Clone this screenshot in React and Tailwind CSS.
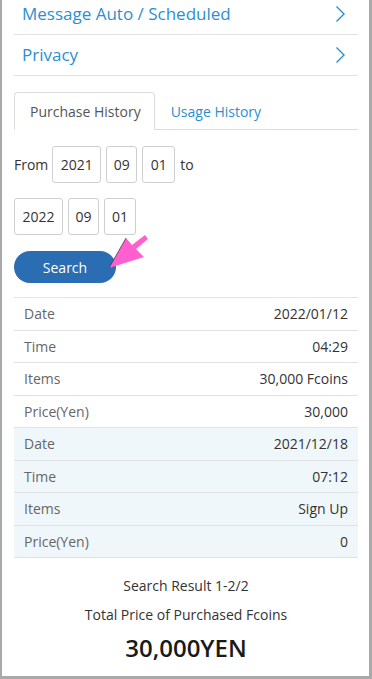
import React from "react";

const font = { fontFamily: '"Open Sans", "Noto Sans", sans-serif' };

const MenuRow = ({ label, first }) => (
  <div
    className={`flex h-[41px] items-center justify-between border-b border-[#e2e2e2] pl-[8px] pr-[12px] ${
      first ? "-mt-[6px]" : ""
    }`}
  >
    <span className="text-[17px] text-[#2a8fd0]">{label}</span>
    <svg width="11" height="18" viewBox="0 0 11 18" fill="none">
      <path d="M1.5 1.5 L9 9 L1.5 16.5" stroke="#2a8fd0" strokeWidth="1.4" />
    </svg>
  </div>
);

const DateBox = ({ value, w }) => (
  <div
    className={`flex h-[37px] items-center justify-center rounded-[3px] border border-[#cfcfcf] text-[14px] text-[#333] ${w}`}
  >
    {value}
  </div>
);

const Row = ({ label, value }) => (
  <div className="flex h-[32.5px] items-center justify-between border-b border-[#dfe3e6] px-[10px] text-[14px]">
    <span className="text-[#666]">{label}</span>
    <span className="text-[#333]">{value}</span>
  </div>
);

const records = [
  { date: "2022/01/12", time: "04:29", items: "30,000 Fcoins", price: "30,000", alt: false },
  { date: "2021/12/18", time: "07:12", items: "Sign Up", price: "0", alt: true },
];

export default function App() {
  return (
    <div
      style={font}
      className="relative h-[679px] w-[372px] overflow-hidden border-b-[3px] border-l-2 border-r-[3px] border-[#a9a9a9] bg-white"
    >
      <div className="pl-[12px] pr-[11px]">
        <MenuRow label="Message Auto / Scheduled" first />
        <MenuRow label="Privacy" />

        {/* tabs */}
        <div className="mt-[16px] flex h-[38px] border-b border-[#dcdcdc]">
          <div className="-mb-px flex items-center rounded-t-[4px] border border-b-white border-[#dcdcdc] bg-white pl-[15px] pr-[13px] pt-px text-[14px] text-[#555]">
            Purchase History
          </div>
          <div className="flex items-center pl-[16px] pt-px text-[14px] text-[#2a8fd0]">
            Usage History
          </div>
        </div>

        {/* date range */}
        <div className="mt-[16px] flex w-[200px] flex-wrap items-center gap-x-[5px] gap-y-[15px] text-[14px] text-[#333]">
          <span className="-mr-px">From</span>
          <DateBox value="2021" w="w-[49px]" />
          <DateBox value="09" w="w-[31px]" />
          <DateBox value="01" w="w-[33px]" />
          <span>to</span>
          <DateBox value="2022" w="w-[49px]" />
          <DateBox value="09" w="w-[31px]" />
          <DateBox value="01" w="w-[32px]" />
        </div>

        <button className="mt-[16px] flex h-[32px] w-[102px] items-center justify-center rounded-full bg-[#2b6db3] text-[14px] text-white">
          Search
        </button>

        {/* results */}
        <div className="mt-[14px] border-t border-[#dfe3e6]">
          {records.map((r) => (
            <div key={r.date} className={r.alt ? "bg-[#f0f7fb]" : ""}>
              <Row label="Date" value={r.date} />
              <Row label="Time" value={r.time} />
              <Row label="Items" value={r.items} />
              <Row label="Price(Yen)" value={r.price} />
            </div>
          ))}
        </div>

        <div className="mt-[17px] text-center text-[14px] text-[#333]">
          Search Result 1-2/2
        </div>
        <div className="mt-[8px] text-center text-[14px] text-[#333]">
          Total Price of Purchased Fcoins
        </div>
        <div className="mt-[5px] text-center text-[24px] font-semibold text-[#1a1a1a]">
          30,000YEN
        </div>
      </div>

      {/* pink pointer */}
      <svg
        className="absolute left-[100px] top-[230px]"
        width="50"
        height="42"
        viewBox="100 230 50 42"
      >
        <path d="M107 268 L124 238 L130 245 L143 235 L146 239 L134 249 L142 257 Z" fill="#ff5fcf" />
        <path d="M107 268 L124 238" stroke="#333" strokeWidth="0.7" />
      </svg>
    </div>
  );
}
